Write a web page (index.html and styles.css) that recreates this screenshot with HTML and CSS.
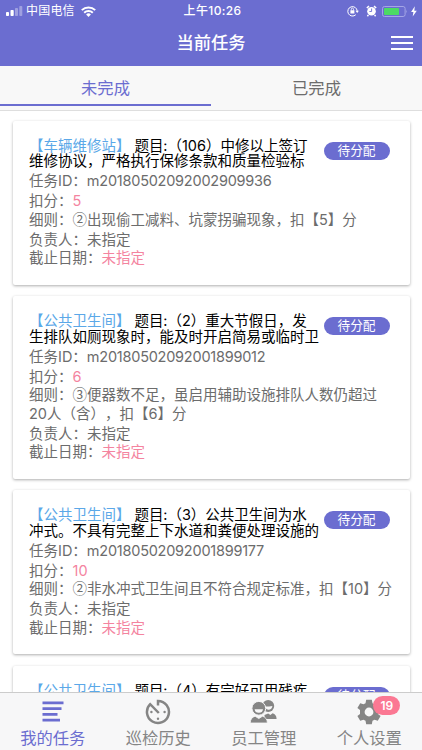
FILE: index.html
```
<!DOCTYPE html>
<html lang="zh-CN">
<head>
<meta charset="utf-8">
<title>当前任务</title>
<link rel="stylesheet" href="styles.css">
</head>
<body>
<div class="app">
  <header class="header">
    <div class="status">
      <div class="status-left">
        <svg class="signal" width="17" height="10" viewBox="0 0 17 10" fill="#fff"><rect x="0" y="6" width="3" height="4" rx=".8"/><rect x="4.5" y="4" width="3.2" height="6" rx=".8"/><g opacity=".35"><rect x="9" y="2" width="3" height="8" rx=".8"/><rect x="13.3" y="0" width="3" height="10" rx=".8"/></g></svg>
        <span class="carrier">中国电信</span>
        <svg width="15" height="11" viewBox="0 0 15 11" fill="none" stroke="#fff" stroke-width="2"><path d="M.8 4.1a9.7 9.7 0 0 1 13.4 0M3.2 6.7a6.2 6.2 0 0 1 8.6 0"/><path fill="#fff" stroke="none" d="M5.1 8.4a3.5 3.5 0 0 1 4.8 0L7.5 10.9z"/></svg>
      </div>
      <span class="clock">上午10:26</span>
      <div class="status-right">
        <svg width="12" height="12" viewBox="0 0 12 12" fill="none" stroke="#fff"><path d="M8.8 9.7A4.7 4.7 0 1 1 10.2 6"/><path fill="#fff" stroke="none" d="M8.5 5.7h3.4l-1.7 2.2zM3.4 5.2h4v3.2h-4z"/><path d="M4.3 5.4V4.2a1.1 1.1 0 0 1 2.2 0v1.2" stroke-width=".8"/></svg>
        <svg class="alarm" width="11" height="12" viewBox="0 0 11 12"><circle cx="5.5" cy="6.3" r="4.3" fill="#fff"/><path d="M.8 3 3 1.2M10.2 3 8 1.2M2.4 10l-1 1.2M8.6 10l1 1.2" stroke="#fff" stroke-width="1.5"/><path d="M5.6 3.5v3H3.4" fill="none" stroke="#6b6dd0" stroke-width=".9"/></svg>
        <svg class="battery" width="26" height="11" viewBox="0 0 26 11"><rect x=".5" y=".5" width="22.6" height="10" rx="2" fill="none" stroke="#a5a6e6"/><rect x="2" y="2" width="15" height="7" rx=".7" fill="#4cda64"/><path d="M24.3 3.8q1.4 1.7 0 3.4z" fill="#a5a6e6"/></svg>
        <svg width="6" height="11" viewBox="0 0 6 11"><path d="M3.8.3.1 6h2.3l-.7 4.6L5.8 4.7H3.3z" fill="#fff"/></svg>
      </div>
    </div>
    <div class="navbar">
      <h1 class="nav-title">当前任务</h1>
      <div class="menu"><i></i><i></i><i></i></div>
    </div>
  </header>
  <nav class="tabs">
    <div class="tab tab-active">未完成</div>
    <div class="tab">已完成</div>
  </nav>
  <main class="list">
    <article class="card">
      <div class="head">
        <div class="title"><div><span class="place">【车辆维修站】</span><span class="q">题目:</span>（106）中修以上签订</div><div>维修协议，严格执行保修条款和质量检验标</div></div>
        <span class="pill">待分配</span>
      </div>
      <div class="row id">任务ID：<span class="num">m20180502092002909936</span></div>
      <div class="row score">扣分：<b>5</b></div>
      <div class="row">细则：<span class="mark">②</span>出现偷工减料、坑蒙拐骗现象，扣【5】分</div>
      <div class="row owner">负责人：未指定</div>
      <div class="row">截止日期：<b>未指定</b></div>
    </article>
    <article class="card">
      <div class="head">
        <div class="title"><div><span class="place">【公共卫生间】</span><span class="q">题目:</span>（2）重大节假日，发</div><div>生排队如厕现象时，能及时开启简易或临时卫</div></div>
        <span class="pill">待分配</span>
      </div>
      <div class="row id">任务ID：<span class="num">m20180502092001899012</span></div>
      <div class="row score">扣分：<b>6</b></div>
      <div class="row">细则：<span class="mark">③</span>便器数不足，虽启用辅助设施排队人数仍超过<br>20人（含），扣【6】分</div>
      <div class="row owner">负责人：未指定</div>
      <div class="row">截止日期：<b>未指定</b></div>
    </article>
    <article class="card">
      <div class="head">
        <div class="title"><div><span class="place">【公共卫生间】</span><span class="q">题目:</span>（3）公共卫生间为水</div><div>冲式。不具有完整上下水道和粪便处理设施的</div></div>
        <span class="pill">待分配</span>
      </div>
      <div class="row id">任务ID：<span class="num">m20180502092001899177</span></div>
      <div class="row score">扣分：<b>10</b></div>
      <div class="row">细则：<span class="mark">②</span>非水冲式卫生间且不符合规定标准，扣【10】分</div>
      <div class="row owner">负责人：未指定</div>
      <div class="row">截止日期：<b>未指定</b></div>
    </article>
    <article class="card">
      <div class="head">
        <div class="title"><div><span class="place">【公共卫生间】</span><span class="q">题目:</span>（4）有完好可用残疾</div></div>
        <span class="pill">待分配</span>
      </div>
    </article>
  </main>
  <footer class="bottom">
    <div class="item item-active">
      <svg width="26" height="26" viewBox="0 0 26 26" fill="currentColor"><path d="M2.5 2.5h21v2.7h-21zM2.5 8.3h19v2.7h-19zM2.5 14h15v2.7h-15zM2.5 19.8h17.5v2.7h-17.5z"/></svg>
      <span>我的任务</span>
    </div>
    <div class="item">
      <svg width="26" height="26" viewBox="0 0 26 26" fill="none" stroke="currentColor" stroke-width="2.5"><path d="M13 6.6V2a11 11 0 1 1-7.8 3.2L13.8 14"/><g fill="currentColor" stroke="none"><circle cx="6.4" cy="13" r="1.2"/><circle cx="19.6" cy="13" r="1.2"/><circle cx="13" cy="19.8" r="1.2"/></g></svg>
      <span>巡检历史</span>
    </div>
    <div class="item">
      <svg width="28" height="26" viewBox="0 0 28 26" fill="currentColor"><circle cx="18.2" cy="7" r="6"/><path d="M14.500 20v-4l3.700-1.500 2.200 1.400 2.200-1.600q3.800 1 4 5.700z"/><path d="M15.500 7.500q3.600 0 6.900-.6-.4 3.500-4 3.800-1.600 0-2.900-1.400z" fill="#f7f7f8"/><circle cx="8.800" cy="9.300" r="6.900" stroke="#f7f7f8"/><path d="M.2 24q.2-5.400 4.900-6.800l3.700 2.400 3.700-2.400q4.700 1.400 4.900 6.800z" stroke="#f7f7f8" stroke-width=".8"/><path d="M4.600 10.200h8.400q-.4 3.500-4.200 3.500t-4.200-3.500z" fill="#f7f7f8"/></svg>
      <span>员工管理</span>
    </div>
    <div class="item">
      <div class="gear">
        <svg width="26" height="26" viewBox="0 0 26 26" fill="currentColor"><path fill-rule="evenodd" d="M10.2.8h5.6l.7 3.4 2 1.100 3.300-1.100 2.800 4.700-2.600 2.200v3.800l2.600 2.200-2.800 4.700-3.300-1.100-2 1.100-.7 3.400h-5.600l-.7-3.400-2-1.100-3.300 1.100-2.800-4.700L4 14.900v-3.800L1.400 8.900l2.800-4.700 3.300 1.100 2-1.100zM13 8.600a4.400 4.400 0 1 0 0 8.800 4.400 4.400 0 0 0 0-8.800z"/></svg>
        <span class="badge">19</span>
      </div>
      <span>个人设置</span>
    </div>
  </footer>
</div>
</body>
</html>
```
FILE: styles.css
```
* { box-sizing: border-box; }
body {
  margin: 0;
  font-family: Inter, "Noto Sans CJK SC", sans-serif;
  background: #fff;
  text-spacing-trim: space-all;
}
.app {
  width: 422px;
  height: 750px;
  display: flex;
  flex-direction: column;
  overflow: hidden;
}
.header {
  height: 65.5px;
  flex: none;
  background: #6b6dd0;
  color: #fff;
}
.status {
  height: 22px;
  padding: 0 5px 0 6px;
  display: grid;
  grid-template-columns: 1fr auto 1fr;
  align-items: center;
  font-size: 12px;
  line-height: 22px;
}
.status-left, .status-right { display: flex; align-items: center; }
.status-right { justify-content: flex-end; }
.carrier { margin: 0 6px 0 3px; letter-spacing: .2px; }
.clock { padding-left: 2px; letter-spacing: .35px; font-weight: 500; }
.alarm { margin-left: 7px; }
.battery { margin: 0 3px 0 5px; }
.navbar {
  height: 42px;
  display: grid;
  grid-template-columns: 1fr auto 1fr;
  align-items: center;
  padding: 0 9px;
}
.nav-title {
  grid-column: 2;
  margin: 0;
  font-size: 17.3px;
  line-height: 24px;
  font-weight: 500;
}
.menu {
  justify-self: end;
  width: 22px;
  display: grid;
  gap: 4px;
}
.menu i { height: 2px; background: #fff; }
.tabs {
  flex: none;
  height: 45px;
  display: flex;
  background: #f8f8f8;
  border-bottom: 1px solid #dedede;
}
.tab {
  flex: 1;
  height: 40px;
  text-align: center;
  font-size: 16.3px;
  line-height: 44px;
  color: #6c6c6c;
}
.tab-active { color: #6b6dd0; border-bottom: 2px solid #6b6dd0; }
.list {
  flex: 1;
  min-height: 0;
  overflow: hidden;
  padding: 10px 12.5px 0;
  display: flex;
  flex-direction: column;
  gap: 11.7px;
}
.card {
  flex: none;
  padding: 17px 16px 17px 16.5px;
  background: #fff;
  border-radius: 2px;
  box-shadow: 0 1px 3px rgba(0, 0, 0, .32);
  font-size: 14.5px;
  color: #6c6c6c;
  white-space: nowrap;
}
.head { display: flex; justify-content: space-between; }
.title { color: #000; line-height: 15.5px; }
.title > div { height: 15.5px; }
.place { color: #5ba8e8; margin-right: 4px; }
.q { letter-spacing: -.1px; }
.pill {
  width: 66px;
  height: 18px;
  margin: 4px 4px 0 0;
  border-radius: 9px;
  background: #6b6dd0;
  color: #fff;
  text-align: center;
  font-size: 12.7px;
  line-height: 17px;
}
.row { line-height: 18.5px; }
.id { margin-top: 3.5px; }
.num { letter-spacing: -.24px; }
.mark { font-family: "Noto Sans CJK SC", sans-serif; line-height: 1; }
.score { margin-top: 1.5px; }
.owner { margin-top: 1.5px; }
.row b { font-weight: 400; color: #f4849f; }
.bottom {
  flex: none;
  height: 58px;
  display: flex;
  background: #f7f7f8;
  border-top: 1px solid #ccc;
}
.item {
  flex: 1;
  display: flex;
  flex-direction: column;
  align-items: center;
  padding-top: 6px;
  font-size: 16.3px;
  line-height: 26px;
  color: #858585;
}
.item-active { color: #6b6dd0; }
.item svg { flex: none; display: block; }
.gear { position: relative; height: 26px; }
.badge {
  position: absolute;
  left: 17px;
  top: -3px;
  width: 27px;
  height: 19px;
  border-radius: 10px;
  background: #fb7893;
  color: #fff;
  text-align: center;
  font-size: 12px;
  line-height: 19px;
  font-weight: 600;
}
```
